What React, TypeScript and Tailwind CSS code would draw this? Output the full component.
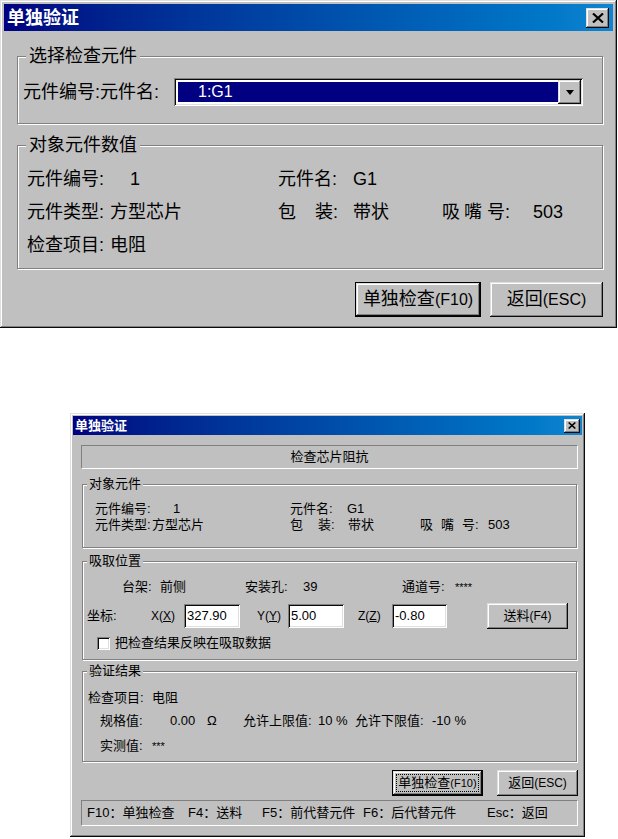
import React from 'react';

const raised =
  'shadow-[inset_-1px_-1px_#0a0a0a,inset_1px_1px_#dfdfdf,inset_-2px_-2px_#808080,inset_2px_2px_#ffffff]';
const sunken =
  'shadow-[inset_1px_1px_#808080,inset_-1px_-1px_#ffffff,inset_2px_2px_#0a0a0a,inset_-2px_-2px_#dfdfdf]';

function CloseButton({ big }: { big?: boolean }) {
  return (
    <div
      className={`flex items-center justify-center bg-[#c0c0c0] ${raised} ${
        big ? 'w-[23px] h-[20px]' : 'w-[16px] h-[14px]'
      }`}
    >
      <svg width={big ? 12 : 8} height={big ? 10 : 7} viewBox="0 0 12 10">
        <path d="M1 0.5 L11 9.5 M11 0.5 L1 9.5" stroke="#000" strokeWidth={big ? 2.2 : 2.4} />
      </svg>
    </div>
  );
}

function GroupBox({
  label,
  className,
  labelClassName,
  children,
}: {
  label: string;
  className: string;
  labelClassName: string;
  children: React.ReactNode;
}) {
  return (
    <div
      className={`flex flex-col border border-[#808080] shadow-[1px_1px_0_#ffffff,inset_1px_1px_0_#ffffff] ${className}`}
    >
      <span className={`self-start bg-[#c0c0c0] ${labelClassName}`}>{label}</span>
      {children}
    </div>
  );
}

function TopDialog() {
  return (
    <div className={`w-[617px] h-[328px] bg-[#c0c0c0] p-[4px] flex flex-col ${raised}`}>
      {/* Title bar */}
      <div className="h-[27px] flex items-center justify-between pl-[3px] pr-[4px] bg-linear-to-r from-[#000080] to-[#1084d0]">
        <span className="text-white font-bold text-[18px] leading-none">单独验证</span>
        <CloseButton big />
      </div>

      <GroupBox
        label="选择检查元件"
        className="mt-[25px] ml-[13px] mr-[10px] h-[68px]"
        labelClassName="-mt-[12px] ml-[8px] px-[3px] text-[18px] leading-[22px]"
      >
        <div className="mt-[11px] pl-[5px] flex items-center">
          <span className="w-[151px] text-[18px] leading-none">元件编号:元件名:</span>
          <div className={`w-[409px] h-[28px] bg-white p-[2px] flex ${sunken}`}>
            <div className="flex-1 my-[2px] ml-[2px] bg-[#000080] flex items-center pl-[20px] text-white text-[16px]">
              1:G1
            </div>
            <div className={`w-[23px] h-full bg-[#c0c0c0] flex items-center justify-center ${raised}`}>
              <svg width="8" height="5" viewBox="0 0 8 5">
                <path d="M0 0 H8 L4 5 Z" fill="#000" />
              </svg>
            </div>
          </div>
        </div>
      </GroupBox>

      <GroupBox
        label="对象元件数值"
        className="mt-[21px] ml-[13px] mr-[10px] h-[124px]"
        labelClassName="-mt-[12px] ml-[8px] px-[3px] text-[18px] leading-[22px]"
      >
        <div className="mt-[7px] pl-[9px] flex flex-col text-[18px]">
          <div className="flex h-[33px] items-center">
            <span className="w-[103px]">元件编号:</span>
            <span className="w-[148px]">1</span>
            <span className="w-[75px]">元件名:</span>
            <span>G1</span>
          </div>
          <div className="flex h-[33px] items-center">
            <span className="w-[83px]">元件类型:</span>
            <span className="w-[168px]">方型芯片</span>
            <span className="w-[75px] flex">
              <span>包</span>
              <span className="ml-[19px]">装:</span>
            </span>
            <span className="w-[89px]">带状</span>
            <span className="w-[91px] flex">
              <span>吸</span>
              <span className="ml-[4px]">嘴</span>
              <span className="ml-[5px]">号:</span>
            </span>
            <span>503</span>
          </div>
          <div className="flex h-[33px] items-center">
            <span className="w-[83px]">检查项目:</span>
            <span>电阻</span>
          </div>
        </div>
      </GroupBox>

      <div className="mt-[13px] mr-[10px] flex justify-end gap-[9px] text-[18px]">
        <div className="w-[126px] h-[35px] border border-black">
          <div className={`w-full h-full flex items-center justify-center whitespace-nowrap ${raised}`}>
            单独检查<span className="text-[16px]">(F10)</span>
          </div>
        </div>
        <div className={`w-[113px] h-[35px] flex items-center justify-center whitespace-nowrap ${raised}`}>
          返回<span className="text-[16px]">(ESC)</span>
        </div>
      </div>
    </div>
  );
}

function BottomDialog() {
  return (
    <div
      className={`ml-[70px] mt-[85px] w-[515px] h-[424px] bg-[#c0c0c0] p-[3px] flex flex-col text-[13px] whitespace-nowrap ${raised}`}
    >
      {/* Title bar */}
      <div className="h-[19px] flex items-center justify-between pl-[2px] pr-[2px] bg-linear-to-r from-[#000080] to-[#1084d0]">
        <span className="text-white font-bold text-[13px] leading-none">单独验证</span>
        <CloseButton />
      </div>

      <div className="mt-[10px] ml-[8px] mr-[4px] h-[24px] border border-t-[#808080] border-l-[#808080] border-r-white border-b-white flex items-center justify-center">
        检查芯片阻抗
      </div>

      <GroupBox
        label="对象元件"
        className="mt-[15px] ml-[9px] mr-[5px] h-[64px]"
        labelClassName="-mt-[9px] ml-[4px] px-[2px] leading-[16px]"
      >
        <div className="mt-[9px] pl-[12px] flex flex-col">
          <div className="flex h-[16px] items-center">
            <span className="w-[78px]">元件编号:</span>
            <span className="w-[117px]">1</span>
            <span className="w-[57px]">元件名:</span>
            <span>G1</span>
          </div>
          <div className="flex h-[16px] items-center">
            <span className="w-[57px]">元件类型:</span>
            <span className="w-[138px]">方型芯片</span>
            <span className="w-[58px] flex">
              <span>包</span>
              <span className="ml-[15px]">装:</span>
            </span>
            <span className="w-[72px]">带状</span>
            <span className="w-[68px] flex">
              <span>吸</span>
              <span className="ml-[8px]">嘴</span>
              <span className="ml-[8px]">号:</span>
            </span>
            <span>503</span>
          </div>
        </div>
      </GroupBox>

      <GroupBox
        label="吸取位置"
        className="mt-[13px] ml-[9px] mr-[5px] h-[99px]"
        labelClassName="-mt-[9px] ml-[4px] px-[2px] leading-[16px]"
      >
        <div className="mt-[8px] flex flex-col">
          <div className="flex h-[20px] items-center pl-[39px]">
            <span className="w-[38px]">台架:</span>
            <span className="w-[85px]">前侧</span>
            <span className="w-[58px]">安装孔:</span>
            <span className="w-[99px]">39</span>
            <span className="w-[53px]">通道号:</span>
            <span className="text-[11px]">****</span>
          </div>
          <div className="mt-[5px] flex h-[28px] items-center pl-[4px]">
            <span className="w-[64px]">坐标:</span>
            <span className="w-[33px] text-[12px]">
              X(<u>X</u>)
            </span>
            <div className={`w-[56px] h-[24px] bg-white pl-[3px] pt-[2px] ${sunken}`}>327.90</div>
            <span className="ml-[17px] w-[31px] text-[12px]">
              Y(<u>Y</u>)
            </span>
            <div className={`w-[56px] h-[24px] bg-white pl-[3px] pt-[2px] ${sunken}`}>5.00</div>
            <span className="ml-[14px] w-[34px] text-[12px]">
              Z(<u>Z</u>)
            </span>
            <div className={`w-[55px] h-[24px] bg-white pl-[3px] pt-[2px] ${sunken}`}>-0.80</div>
            <div className={`ml-[40px] w-[81px] h-[26px] flex items-center justify-center ${raised}`}>
              送料<span className="text-[12px]">(F4)</span>
            </div>
          </div>
          <div className="mt-[5px] flex h-[16px] items-center pl-[14px]">
            <div className={`w-[13px] h-[13px] bg-white ${sunken}`} />
            <span className="ml-[5px]">把检查结果反映在吸取数据</span>
          </div>
        </div>
      </GroupBox>

      <GroupBox
        label="验证结果"
        className="mt-[11px] ml-[9px] mr-[5px] h-[91px]"
        labelClassName="-mt-[9px] ml-[4px] px-[2px] leading-[16px]"
      >
        <div className="mt-[10px] flex flex-col">
          <div className="flex h-[18px] items-center pl-[5px]">
            <span className="w-[64px]">检查项目:</span>
            <span>电阻</span>
          </div>
          <div className="mt-[5px] flex h-[18px] items-center pl-[17px]">
            <span className="w-[70px]">规格值:</span>
            <span className="w-[37px]">0.00</span>
            <span className="w-[36px]">Ω</span>
            <span className="w-[75px]">允许上限值:</span>
            <span className="w-[37px]">10 %</span>
            <span className="w-[77px]">允许下限值:</span>
            <span>-10 %</span>
          </div>
          <div className="mt-[7px] flex h-[18px] items-center pl-[17px]">
            <span className="w-[52px]">实测值:</span>
            <span className="text-[11px]">***</span>
          </div>
        </div>
      </GroupBox>

      <div className="mt-[8px] mr-[4px] flex justify-end gap-[14px]">
        <div className="w-[91px] h-[26px] border border-black">
          <div className={`w-full h-full p-[3px] ${raised}`}>
            <div className="w-full h-full border border-dotted border-black flex items-center justify-center">
              单独检查<span className="text-[11px]">(F10)</span>
            </div>
          </div>
        </div>
        <div className={`w-[81px] h-[26px] flex items-center justify-center ${raised}`}>
          返回<span className="text-[12px]">(ESC)</span>
        </div>
      </div>

      <div className="mt-[4px] ml-[8px] mr-[4px] h-[26px] border border-t-[#808080] border-l-[#808080] border-r-white border-b-white flex items-center pl-[5px]">
        <span className="w-[101px]">F10：单独检查</span>
        <span className="w-[74px]">F4：送料</span>
        <span className="w-[101px]">F5：前代替元件</span>
        <span className="w-[124px]">F6：后代替元件</span>
        <span>Esc：返回</span>
      </div>
    </div>
  );
}

export default function App() {
  return (
    <div className="w-[618px] h-[839px] bg-white text-black font-['Liberation_Sans','Noto_Sans_CJK_SC',sans-serif] overflow-hidden">
      <TopDialog />
      <BottomDialog />
    </div>
  );
}
